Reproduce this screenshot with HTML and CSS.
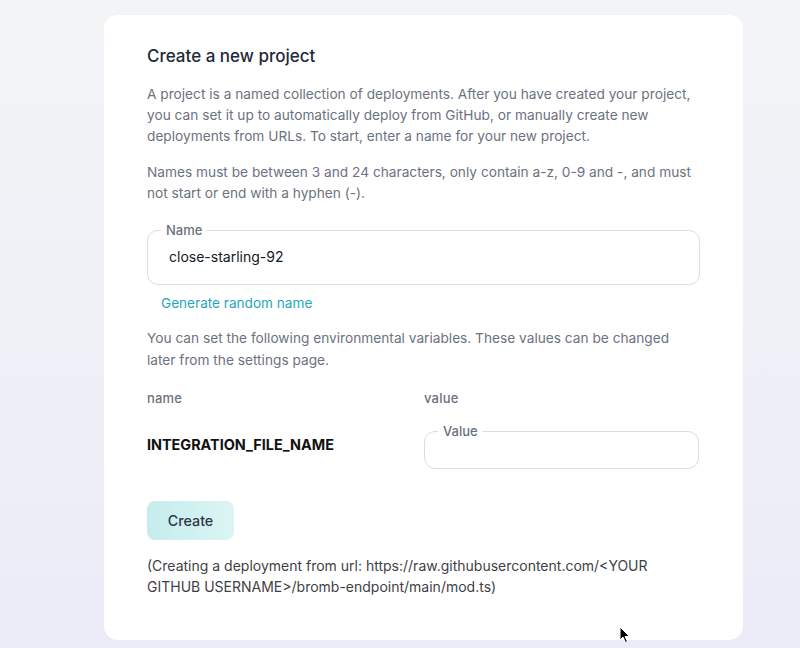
FILE: index.html
```html
<!DOCTYPE html>
<html lang="en">
<head>
<meta charset="utf-8">
<title>Create a new project</title>
<link rel="stylesheet" href="styles.css">
</head>
<body>
<main class="page">
  <section class="card">
    <h1 class="title">Create a new project</h1>
    <p class="muted intro">A project is a named collection of deployments. After you have created your project,<br>you can set it up to automatically deploy from GitHub, or manually create new<br>deployments from URLs. To start, enter a name for your new project.</p>
    <p class="muted rules">Names must be between 3 and 24 characters, only contain a-z, 0-9 and -, and must<br>not start or end with a hyphen (-).</p>
    <fieldset class="field field-name">
      <legend class="legend">Name</legend>
      <input class="input" type="text" value="close-starling-92">
    </fieldset>
    <button class="link" type="button">Generate random name</button>
    <p class="muted env">You can set the following environmental variables. These values can be changed<br>later from the settings page.</p>
    <div class="vars">
      <div class="head">name</div>
      <div class="head">value</div>
      <div class="varname">INTEGRATION_FILE_NAME</div>
      <fieldset class="field field-value">
        <legend class="legend">Value</legend>
        <input class="input small" type="text" value="">
      </fieldset>
    </div>
    <button class="create" type="button">Create</button>
    <p class="note">(Creating a deployment from url: https://raw.githubusercontent.com/&lt;YOUR GITHUB USERNAME&gt;/bromb-endpoint/main/mod.ts)</p>
  </section>
  <svg class="cursor" width="12" height="18" viewBox="0 0 12 18"><path d="M1 1 L1 14 L4 11 L6.5 16.5 L8.5 15.5 L6 10.5 L10.5 10.5 Z" fill="#000" stroke="#fff" stroke-width="1"/></svg>
</main>
</body>
</html>
```
FILE: styles.css
```css
* { box-sizing: border-box; }
html, body { margin: 0; padding: 0; }
body {
  width: 800px;
  height: 648px;
  overflow: hidden;
  font-family: Inter, "Noto Sans", sans-serif;
  background: linear-gradient(180deg, #f3f4f6 0%, #eff0f7 60%, #ebebf8 100%);
}
.page {
  position: relative;
  height: 648px;
  padding: 15px 0 0 104px;
}
.card {
  width: 639px;
  height: 625px;
  background: #fff;
  border-radius: 14px;
  padding: 29px 44px 40px 43px;
  display: flex;
  flex-direction: column;
  align-items: flex-start;
}
.title {
  margin: 0;
  font-size: 17px;
  line-height: 24px;
  font-weight: 500;
  color: #1f2937;
}
.muted {
  margin: 0;
  font-size: 13.7px;
  line-height: 21px;
  color: #6b7280;
  white-space: nowrap;
}
.muted.intro { margin-top: 16px; }
.muted.rules { margin-top: 15px; }
.muted.env { margin-top: 15px; line-height: 21.5px; }
.field {
  margin: 0;
  padding: 0 0 0 19px;
  border: 1px solid #dadde2;
  border-radius: 11px;
  min-width: 0;
}
.field-name {
  width: 553px;
  margin-top: 18px;
  height: 63px;
}
.legend {
  padding: 0 5px;
  margin-left: -6px;
  font-size: 13px;
  line-height: 16px;
  font-weight: 500;
  color: #6b7280;
}
.input {
  border: 0;
  outline: none;
  background: transparent;
  font-family: inherit;
  font-size: 14px;
  color: #111827;
  width: 100%;
  padding: 0 0 0 2px;
  height: 36px;
}
.input.small { height: 20px; }
.link {
  margin: 8px 0 0 14px;
  padding: 0;
  border: 0;
  background: none;
  font-family: inherit;
  font-size: 13.6px;
  line-height: 20px;
  color: #26a6bd;
  cursor: pointer;
}
.vars {
  margin-top: 18px;
  width: 553px;
  display: grid;
  grid-template-columns: 277px 1fr;
  align-items: center;
  row-gap: 16px;
}
.head {
  font-size: 13px;
  line-height: 18px;
  font-weight: 500;
  color: #6b7280;
  letter-spacing: 0.2px;
}
.varname {
  font-size: 14.4px;
  line-height: 20px;
  font-weight: 700;
  color: #111;
  margin-top: -2px;
}
.field-value {
  width: 275px;
  height: 46px;
}
.create {
  margin-top: 32px;
  width: 87px;
  height: 39px;
  border: 0;
  border-radius: 8px;
  background: linear-gradient(90deg, #c5ecee 0%, #dbf5f3 100%);
  font-family: inherit;
  font-size: 14.3px;
  font-weight: 500;
  color: #2d3748;
  cursor: pointer;
}
.note {
  margin: 15px 0 0;
  font-size: 14px;
  line-height: 21px;
  color: #3f3f46;
}
.cursor {
  position: absolute;
  left: 619px;
  top: 626px;
}
```
